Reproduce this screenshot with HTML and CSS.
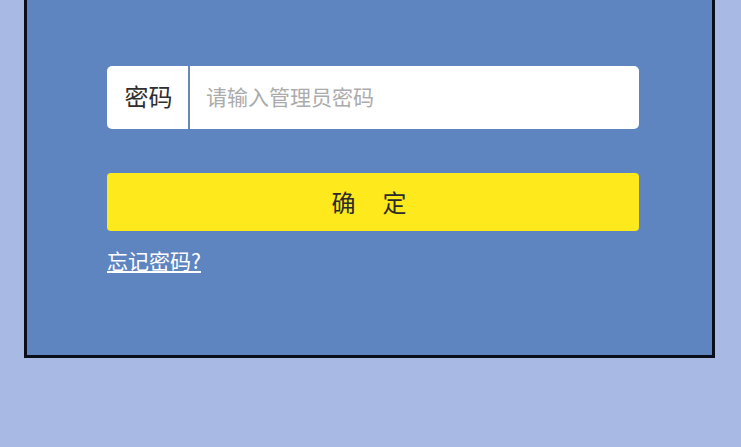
FILE: index.html
```html
<!DOCTYPE html>
<html lang="zh-CN">
<head>
<meta charset="utf-8">
<title>管理员登录</title>
<link rel="stylesheet" href="styles.css">
</head>
<body>
  <div class="panel">
    <form class="login">
      <label class="field">
        <span class="field-label">密码</span>
        <input class="field-input" type="password" placeholder="请输入管理员密码">
      </label>
      <button class="submit" type="button">确<span class="gap"></span>定</button>
      <a class="forgot" href="#">忘记密码?</a>
    </form>
  </div>
</body>
</html>
```

FILE: styles.css
```css
html, body {
  margin: 0;
  padding: 0;
}

body {
  width: 741px;
  height: 447px;
  overflow: hidden;
  background: #a8b9e3;
  font-family: "Noto Sans CJK SC", "Noto Sans", sans-serif;
}

.panel {
  box-sizing: border-box;
  width: 691px;
  height: 358px;
  margin-left: 24px;
  border: 3px solid #0a0d1a;
  border-top: none;
  background: #5f85c0;
  padding: 66px 73px 0 80px;
}

.login {
  display: flex;
  flex-direction: column;
  align-items: flex-start;
}

.field {
  display: flex;
  align-items: stretch;
  width: 532px;
  height: 63px;
  background: #ffffff;
  border-radius: 5px;
  overflow: hidden;
}

.field-label {
  display: flex;
  align-items: center;
  justify-content: center;
  width: 83px;
  padding: 0 0 4px 2px;
  box-sizing: border-box;
  font-size: 24px;
  color: #2e2e2e;
  border-right: 2px solid #6a86b8;
}

.field-input {
  flex: 1;
  border: none;
  outline: none;
  background: transparent;
  padding: 0 0 3px 16px;
  font-family: inherit;
  font-size: 21px;
  color: #333;
}

.field-input::placeholder {
  color: #ababab;
}

.submit {
  display: flex;
  align-items: center;
  justify-content: center;
  width: 532px;
  height: 58px;
  margin-top: 44px;
  padding: 0 8px 2px 0;
  border: none;
  border-radius: 4px;
  background: #fde91c;
  font-family: inherit;
  font-size: 24px;
  color: #2b2b2b;
  cursor: pointer;
}

.gap {
  display: inline-block;
  width: 27px;
}

.forgot {
  margin-top: 14px;
  font-size: 21px;
  line-height: 30px;
  color: #ffffff;
  text-decoration: underline;
  text-underline-offset: 2px;
}
```
